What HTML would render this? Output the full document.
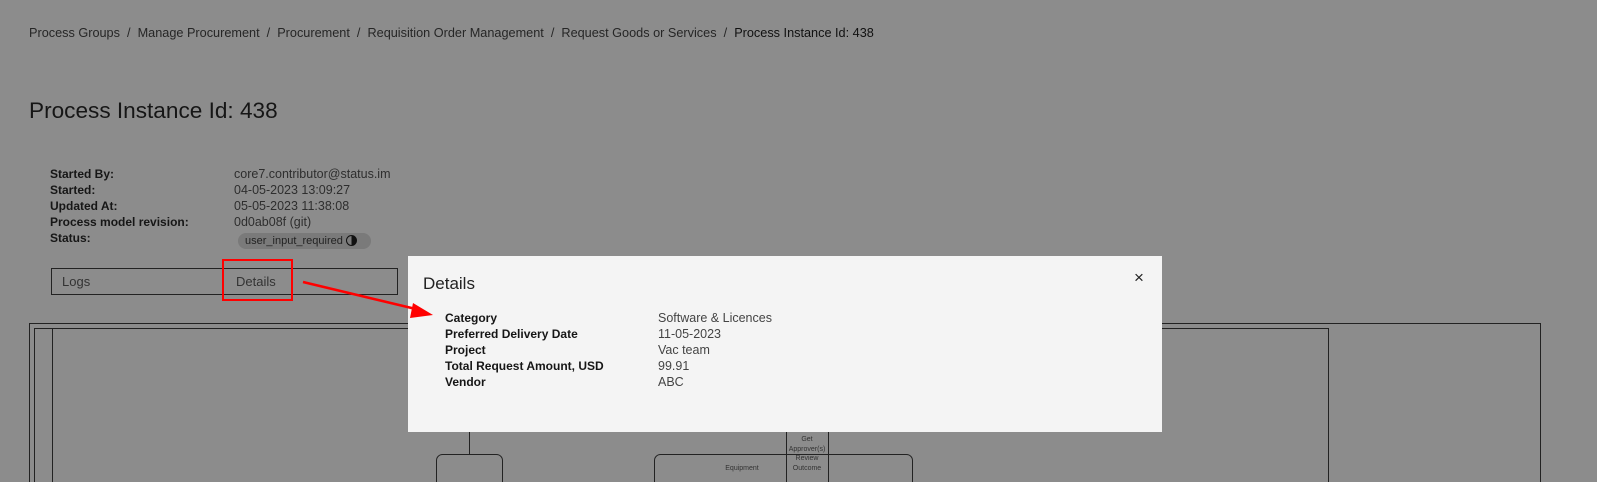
<!DOCTYPE html>
<html><head><style>
body{margin:0;width:1597px;height:482px;overflow:hidden;background:#8c8c8c;font-family:"Liberation Sans",sans-serif;position:relative;color:#161616}
.a{position:absolute;white-space:nowrap}
.bc{top:26px;left:29px;font-size:12.7px;color:#262626}
h1{position:absolute;top:98px;left:29px;margin:0;font-size:22.6px;font-weight:400;color:#161616}
.lab{left:50px;font-size:12px;font-weight:bold;line-height:16px}
.val{left:234px;font-size:12.5px;line-height:16px;color:#2e2e2e}
.b{position:absolute;border:1px solid #222}
.modal{position:absolute;left:408px;top:256px;width:754px;height:176px;background:#f4f4f4}
.ml{left:37px;font-size:12px;font-weight:bold;line-height:16px}
.mv{left:250px;font-size:12.5px;line-height:16px;color:#444}
</style></head><body>
<div class="a bc">Process Groups &nbsp;/&nbsp; Manage Procurement &nbsp;/&nbsp; Procurement &nbsp;/&nbsp; Requisition Order Management &nbsp;/&nbsp; Request Goods or Services &nbsp;/&nbsp; <span style="color:#111">Process Instance Id: 438</span></div>
<h1>Process Instance Id: 438</h1>
<div class="a lab" style="top:166px">Started By:<br>Started:<br>Updated At:<br>Process model revision:<br>Status:</div>
<div class="a val" style="top:166px">core7.contributor@status.im<br>04-05-2023 13:09:27<br>05-05-2023 11:38:08<br>0d0ab08f (git)</div>
<div class="a" style="left:238px;top:233px;width:133px;height:16px;border-radius:8px;background:#7a7a7a;font-size:11px;line-height:16px;padding-left:7px;box-sizing:border-box;color:#222">user_input_required <span style="display:inline-block;width:9px;height:9px;border:1.5px solid #111;border-radius:50%;background:linear-gradient(90deg,transparent 50%,#111 50%);vertical-align:-2px"></span></div>
<div class="b" style="left:51px;top:268px;width:345px;height:25px"></div>
<div class="a" style="left:62px;top:274px;font-size:13px;color:#333">Logs</div>
<div class="a" style="left:236px;top:274px;font-size:13px;color:#333">Details</div>
<div class="a" style="left:222px;top:259px;width:67px;height:38px;border:2px solid #f00"></div>
<svg class="a" style="left:0;top:0" width="1597" height="482">
<rect x="29.5" y="323.5" width="1511" height="170" fill="none" stroke="#222"/>
<rect x="34.5" y="328.5" width="1294" height="170" fill="none" stroke="#222"/>
<line x1="52.5" y1="328" x2="52.5" y2="482" stroke="#222"/>
<line x1="469.5" y1="430" x2="469.5" y2="454" stroke="#222"/>
<rect x="436.5" y="454.5" width="66" height="40" rx="6" fill="none" stroke="#222"/>
<rect x="654.5" y="454.5" width="258" height="40" rx="6" fill="none" stroke="#222"/>
<rect x="786.5" y="430" width="42" height="60" fill="none" stroke="#222"/>
<text x="807" y="441" font-size="7" text-anchor="middle" fill="#333" font-family="Liberation Sans">Get</text>
<text x="807" y="451" font-size="7" text-anchor="middle" fill="#333" font-family="Liberation Sans">Approver(s)</text>
<text x="807" y="460" font-size="7" text-anchor="middle" fill="#333" font-family="Liberation Sans">Review</text>
<text x="807" y="470" font-size="7" text-anchor="middle" fill="#333" font-family="Liberation Sans">Outcome</text>
<text x="742" y="470" font-size="7" text-anchor="middle" fill="#333" font-family="Liberation Sans">Equipment</text>
</svg>
<div class="modal">
<div class="a" style="left:15px;top:18px;font-size:17px;color:#222">Details</div>
<div class="a" style="left:726px;top:12px;font-size:17px;color:#222">×</div>
<div class="a ml" style="top:54px">Category<br>Preferred Delivery Date<br>Project<br>Total Request Amount, USD<br>Vendor</div>
<div class="a mv" style="top:54px">Software &amp; Licences<br>11-05-2023<br>Vac team<br>99.91<br>ABC</div>
</div>
<svg class="a" style="left:0;top:0" width="1597" height="482">
<line x1="303" y1="282" x2="420" y2="310" stroke="#f00" stroke-width="2.5"/>
<polygon points="433,315 413,303 410,318" fill="#f00"/>
</svg>
</body></html>
